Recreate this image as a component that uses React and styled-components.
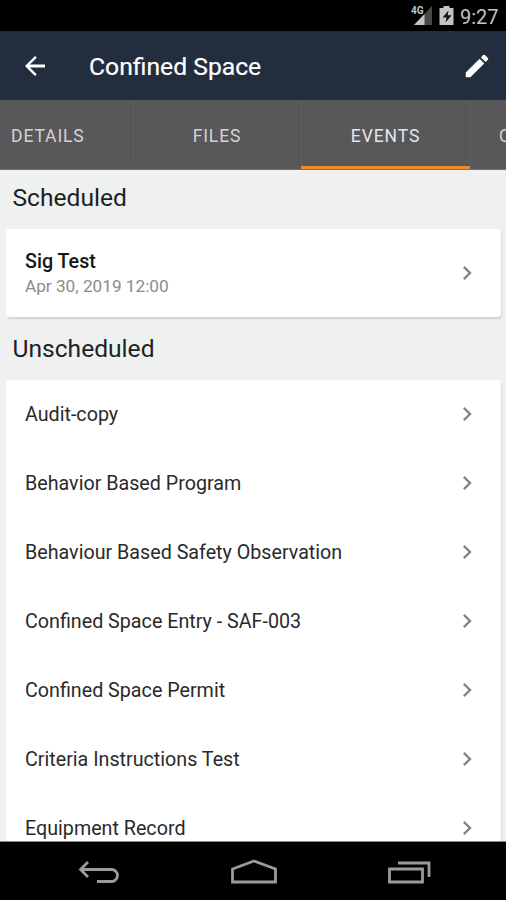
import React from "react";
import styled, { createGlobalStyle } from "styled-components";

const GlobalStyle = createGlobalStyle`
  * { box-sizing: border-box; }
  body { margin: 0; background: #000; }
`;

const Screen = styled.div`
  width: 506px;
  height: 900px;
  display: flex;
  flex-direction: column;
  overflow: hidden;
  background: #eff1f1;
  color: #212121;
  font-family: Roboto, sans-serif;
`;

const StatusBar = styled.div`
  flex: 0 0 31px;
  display: flex;
  align-items: center;
  justify-content: flex-end;
  padding: 1px 7px 0 0;
  background: #000;
  color: #c4c4c4;
`;

const StatusIcons = styled.svg`
  width: 46px;
  height: 26px;
  margin-right: 4px;
`;

const Clock = styled.span`
  width: 39px;
  padding-top: 1px;
  font-size: 20px;
  line-height: 24px;
  white-space: nowrap;
`;

const AppBar = styled.header`
  flex: 0 0 69px;
  display: flex;
  align-items: center;
  padding: 1px 14px 0 20px;
  background: #222e3d;
  color: #fff;
`;

const Title = styled.h1`
  flex: 1;
  margin: 0 0 0 39px;
  padding-top: 2px;
  font-size: 24.7px;
  font-weight: 400;
  line-height: 32px;
  -webkit-text-stroke: 0.2px currentColor;
`;

const Glyph = styled.svg`
  flex: none;
  width: ${(p) => p.$size}px;
  height: ${(p) => p.$size}px;
  fill: currentColor;
`;

const Tabs = styled.nav`
  flex: 0 0 70px;
  display: grid;
  grid-template-columns: 133px 168px 169px 36px;
  overflow: hidden;
  background: #58585a;
  border-bottom: 1px solid #727374;
`;

const Tab = styled.div`
  display: flex;
  align-items: center;
  justify-content: ${(p) => p.$justify || "center"};
  padding: ${(p) => (p.$active ? 5 : 6)}px 0 0 ${(p) => p.$inset || 0}px;
  height: ${(p) => (p.$active ? 70 : 69)}px;
  border-bottom: 4px solid ${(p) => (p.$active ? "#f08a24" : "transparent")};
  color: ${(p) => (p.$active ? "#e6e6e6" : "#d3d3d4")};
  font-size: 17.5px;
  letter-spacing: 0.9px;
  white-space: nowrap;

  & + & {
    box-shadow: inset 1px 0 #5f5f61;
  }
`;

const Content = styled.main`
  flex: 1;
  min-height: 0;
  overflow: hidden;
  padding: 0 5px 0 6px;
`;

const SectionTitle = styled.h2`
  margin: 0;
  padding: ${(p) => p.$top}px 0 0 6.5px;
  height: ${(p) => p.$height}px;
  font-size: 24.6px;
  font-weight: 400;
  line-height: 30px;
`;

const Card = styled.section`
  background: #fff;
  border-radius: 4px;
  box-shadow: 1px 2px 2px rgba(0, 0, 0, 0.12);
`;

const Row = styled.div`
  display: flex;
  align-items: center;
  justify-content: space-between;
  height: ${(p) => p.$height}px;
  padding: 0 20px 0 19px;
  color: #858585;
`;

const RowText = styled.div`
  display: flex;
  flex-direction: column;
  padding-top: 1px;
`;

const Label = styled.span`
  color: #2a2a2a;
  font-size: 19.7px;
  line-height: 26px;
`;

const EventName = styled(Label)`
  color: #161616;
  font-weight: 500;
`;

const EventDate = styled.span`
  color: #8c8c8c;
  font-size: 17.2px;
  line-height: 22px;
  padding-bottom: 2px;
`;

const ChevronGlyph = styled(Glyph)`
  margin-bottom: 1px;
`;

const NavBar = styled.footer`
  flex: 0 0 59px;
  border-top: 1px solid #8b8b8b;
  display: flex;
  align-items: center;
  justify-content: space-between;
  padding: 1px 75px 0 78px;
  background: #000;
`;

const NavIcon = styled.svg`
  width: ${(p) => p.$width}px;
  height: 28px;
  fill: none;
  stroke: #9b9b9b;
  stroke-width: 2.8;
`;

const Chevron = () => (
  <ChevronGlyph $size={28} viewBox="0 0 24 24">
    <path d="M10 6 8.59 7.41 13.17 12l-4.58 4.59L10 18l6-6z" />
  </ChevronGlyph>
);

const programs = [
  "Audit-copy",
  "Behavior Based Program",
  "Behaviour Based Safety Observation",
  "Confined Space Entry - SAF-003",
  "Confined Space Permit",
  "Criteria Instructions Test",
  "Equipment Record",
];

export default function App() {
  return (
    <>
      <GlobalStyle />
      <Screen>
        <StatusBar>
          <StatusIcons viewBox="0 0 46 26">
            <path d="M22 3v19H4z" fill="#484848" />
            <path d="M14.5 11v11H4z" fill="#c4c4c4" />
            <path d="M0 1h13.5v11H0z" fill="#000" />
            <text x="1" y="10.5" fill="#c4c4c4" fontSize="10" fontWeight="700">4G</text>
            <path d="M29.5 5h4V3h6v2h4v17h-14z" fill="#c4c4c4" />
            <path d="M38.5 7.5 32.5 14.5h4l-1 5 6.2-7.2h-4z" fill="#111" />
          </StatusIcons>
          <Clock>9:27</Clock>
        </StatusBar>
        <AppBar>
          <Glyph $size={30} viewBox="0 0 24 24">
            <path d="M20 10.8H7.83l5.59-5.4L12 4l-8 8 8 8 1.41-1.41L7.83 13.2H20z" />
          </Glyph>
          <Title>Confined Space</Title>
          <Glyph $size={30} viewBox="0 0 24 24">
            <path d="M3 17.25V21h3.75L17.81 9.94l-3.75-3.75L3 17.25zM20.71 7.04a1 1 0 0 0 0-1.41l-2.34-2.34a1 1 0 0 0-1.41 0l-1.83 1.83 3.75 3.75 1.83-1.83z" />
          </Glyph>
        </AppBar>
        <Tabs>
          <Tab $justify="flex-start" $inset={11}>DETAILS</Tab>
          <Tab>FILES</Tab>
          <Tab $active>EVENTS</Tab>
          <Tab $justify="flex-start" $inset={29}>C</Tab>
        </Tabs>
        <Content>
          <SectionTitle $top={13} $height={59}>Scheduled</SectionTitle>
          <Card>
            <Row $height={88}>
              <RowText>
                <EventName>Sig Test</EventName>
                <EventDate>Apr 30, 2019 12:00</EventDate>
              </RowText>
              <Chevron />
            </Row>
          </Card>
          <SectionTitle $top={17} $height={63}>Unscheduled</SectionTitle>
          <Card>
            {programs.map((name) => (
              <Row key={name} $height={69}>
                <Label>{name}</Label>
                <Chevron />
              </Row>
            ))}
          </Card>
        </Content>
        <NavBar>
          <NavIcon $width={42} viewBox="0 0 42 28">
            <path d="M2 11.5h31.500a6 6 0 0 1 0 12H19M10 4 2.500 11.500 10 19" />
          </NavIcon>
          <NavIcon $width={46} viewBox="0 0 46 28">
            <path d="M1.500 11 23 3l21.500 8v13H1.500z" />
          </NavIcon>
          <NavIcon $width={44} viewBox="0 0 44 28">
            <path d="M2.500 11h33v13h-33zM11 5h31v14" />
          </NavIcon>
        </NavBar>
      </Screen>
    </>
  );
}
